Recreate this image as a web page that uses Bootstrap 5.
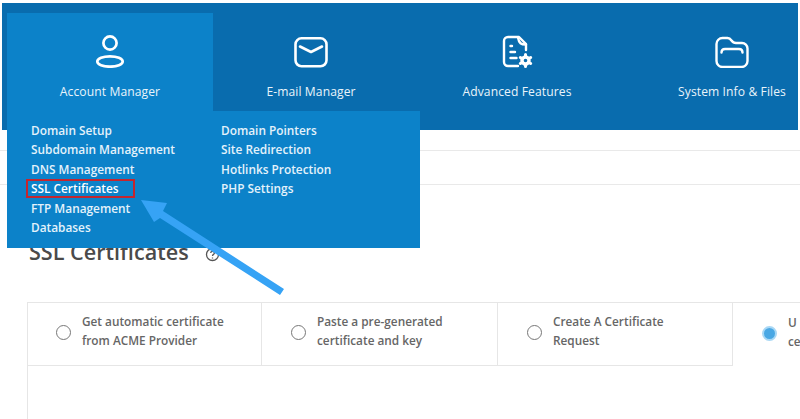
<!DOCTYPE html>
<html lang="en">
<head>
<meta charset="utf-8">
<title>SSL Certificates</title>
<link href="https://cdn.jsdelivr.net/npm/bootstrap@5.3.0/dist/css/bootstrap.min.css" rel="stylesheet">
<style>
html,body{height:419px;overflow:hidden;background:#fff}
body{font-family:"Open Sans","Liberation Sans",sans-serif;position:relative;color:#555}
.hdr-bar{margin:3px 2px 0;height:127px;background:#096cae;padding:10px 0 0 5px}
.top-tab{width:206px;height:98px;color:#e9f4fb;font-size:12.1px;padding-top:22px;flex:none;letter-spacing:.1px}
.top-tab svg{display:block;margin-bottom:15px}
.top-tab.on{background:#0c82c9}
.t2{width:196px}.t3{width:216px}.t4{width:214px}
.drop-panel{position:absolute;left:7px;top:111px;width:413px;height:137px;background:#0c82c9;padding:9.5px 0 0 24px;z-index:2}
.drop-col a{display:block;color:#e4f2fb;font-size:11.85px;line-height:19.6px;text-decoration:none;font-weight:600;white-space:nowrap}
.drop-col{width:190px}
.sel-item{position:relative}
.sel-item::after{content:"";position:absolute;left:-5px;top:0;width:109px;height:19px;border:2px solid #c4262e}
.rule-a{margin-top:20px;border-top:1px solid #e9e9e9;height:34px}
.rule-b{border-top:1px solid #e9e9e9;height:49px}
.page-title{font-size:21.6px;font-weight:600;color:#4a4a4a;margin:0 0 0 29px;line-height:38px;height:69px}
.help-dot{position:absolute;left:205px;top:247px}
.opt-box{margin-left:27px;border-left:1px solid #e6e6e6;height:120px}
.opt-row{border-top:1px solid #e6e6e6;height:63px}
.opt-cell{flex:none;width:235px;height:63px;border-right:1px solid #e6e6e6;border-bottom:1px solid #e6e6e6;font-size:11.8px;line-height:19px;font-weight:600;color:#666;padding:0 0 4px 29px;white-space:nowrap}
.opt-cell.c1{width:234px;padding-left:28px}
.opt-cell.c2{width:236px}
.opt-cell.c4{border:0;padding-left:29px;width:auto}
.opt-label{margin-bottom:2px}
.ring{width:15px;height:15px;border:1.6px solid #777;border-radius:50%;flex:none;margin-right:11px}
.ring.sel{background:#4aa8e4;border:2px solid #a9d8f5;margin-top:2px}
.arrow-over{position:absolute;left:0;top:0;z-index:3;pointer-events:none}
</style>
</head>
<body>
<header class="hdr-bar">
  <nav class="d-flex">
    <a class="top-tab on d-flex flex-column align-items-center text-decoration-none">
      <svg width="32" height="33" viewBox="0 0 32 33" fill="none" stroke="#fff" stroke-width="2.7"><circle cx="16" cy="8" r="6.600"/><ellipse cx="16" cy="26.500" rx="12.700" ry="5.200"/></svg>
      <span>Account Manager</span>
    </a>
    <a class="top-tab t2 d-flex flex-column align-items-center text-decoration-none">
      <svg width="34" height="33" viewBox="0 0 34 33" fill="none" stroke="#fff" stroke-width="2.6" stroke-linecap="round" stroke-linejoin="round"><rect x="1.500" y="3.300" width="31" height="28" rx="6"/><path d="M6 11.500l11 5.500 11-5.500"/></svg>
      <span>E-mail Manager</span>
    </a>
    <a class="top-tab t3 d-flex flex-column align-items-center text-decoration-none">
      <svg width="32" height="33" viewBox="0 0 32 33" fill="none" stroke="#fff" stroke-width="2.4" stroke-linecap="round" stroke-linejoin="round"><path d="M25 15V9L18 2H7a4 4 0 0 0-4 4v21a4 4 0 0 0 4 4h10"/><path d="M17 2.500c1 6 3 7 8 7"/><path d="M9.500 11h1.500M9.500 17h4.500M9.500 23h6"/><circle cx="24.500" cy="25.500" r="3.500" stroke-width="3.400"/><path d="M24.500 19.500v1.500M24.500 30v1.500M19.300 22.500l1.300.8M28.400 27.700l1.300.8M19.300 28.500l1.300-.8M28.400 23.300l1.300-.8" stroke-width="3"/></svg>
      <span>Advanced Features</span>
    </a>
    <a class="top-tab t4 d-flex flex-column align-items-center text-decoration-none">
      <svg width="34" height="33" viewBox="0 0 34 33" fill="none" stroke="#fff" stroke-width="2.4" stroke-linecap="round" stroke-linejoin="round"><path d="M1.500 10V9a6 6 0 0 1 6-6h5c2 0 3 1 4 2.500S19 8 21 8h6a5.500 5.500 0 0 1 5.500 5.500V26a6 6 0 0 1-6 6H7.500a6 6 0 0 1-6-6z"/><path d="M6.500 17.500c0-2 1-3.500 3.500-3.500h14c2.500 0 3.500 1.500 3.500 3.500"/></svg>
      <span>System Info &amp; Files</span>
    </a>
  </nav>
</header>

<div class="drop-panel d-flex">
  <div class="drop-col">
    <a href="#">Domain Setup</a>
    <a href="#">Subdomain Management</a>
    <a href="#">DNS Management</a>
    <a href="#" class="sel-item text-white">SSL Certificates</a>
    <a href="#">FTP Management</a>
    <a href="#">Databases</a>
  </div>
  <div class="drop-col">
    <a href="#">Domain Pointers</a>
    <a href="#">Site Redirection</a>
    <a href="#">Hotlinks Protection</a>
    <a href="#">PHP Settings</a>
  </div>
</div>

<div class="rule-a"></div>
<div class="rule-b"></div>
<h1 class="page-title">SSL Certificates</h1>
<svg class="help-dot" width="15" height="15" viewBox="0 0 15 15" fill="none" stroke="#555" stroke-width="1.300"><circle cx="7.500" cy="7.500" r="6"/><path d="M5.700 6c0-2.300 3.700-2.300 3.700 0 0 1.500-1.900 1.300-1.900 3"/><path d="M7.500 10.500v1"/></svg>

<section class="opt-box">
  <div class="opt-row d-flex">
    <div class="opt-cell c1 d-flex align-items-center"><span class="ring"></span><span class="opt-label">Get automatic certificate<br>from ACME Provider</span></div>
    <div class="opt-cell c2 d-flex align-items-center"><span class="ring"></span><span class="opt-label">Paste a pre-generated<br>certificate and key</span></div>
    <div class="opt-cell d-flex align-items-center"><span class="ring"></span><span class="opt-label">Create A Certificate<br>Request</span></div>
    <div class="opt-cell c4 d-flex align-items-center"><span class="ring sel"></span><span class="opt-label">U<br>ce</span></div>
  </div>
</section>

<svg class="arrow-over" width="800" height="419" viewBox="0 0 800 419"><path d="M141 200L167 203 163 211 284 289 280 295 160 218 154 222z" fill="#36a3f5"/></svg>
<script src="https://cdn.jsdelivr.net/npm/bootstrap@5.3.0/dist/js/bootstrap.bundle.min.js"></script>
</body>
</html>
